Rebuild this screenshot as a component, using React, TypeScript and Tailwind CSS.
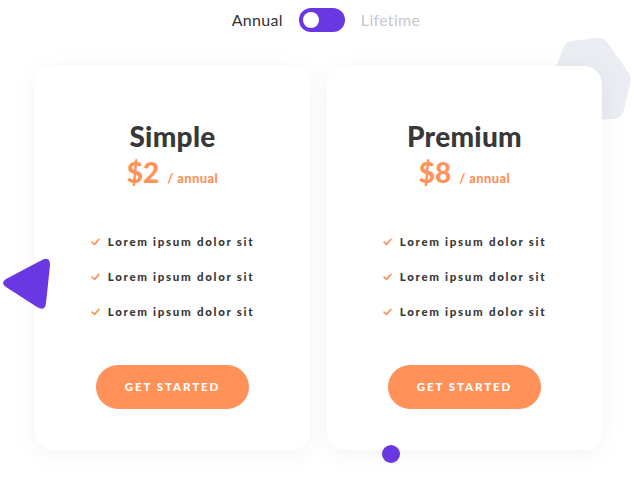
import React, { useState } from 'react';

const features = ['Lorem ipsum dolor sit', 'Lorem ipsum dolor sit', 'Lorem ipsum dolor sit'];

const plans = [
  { name: 'Simple', price: '$2' },
  { name: 'Premium', price: '$8' },
];

const Check: React.FC = () => (
  <svg width="9" height="8" viewBox="0 0 9 8" className="shrink-0">
    <path d="M1.2 4.2 L3.5 6.3 L7.8 1.5" fill="none" stroke="#ff9159" strokeWidth="1.8" strokeLinecap="round" strokeLinejoin="round" />
  </svg>
);

const PlanCard: React.FC<{ name: string; price: string }> = ({ name, price }) => (
  <div className="relative z-10 w-[275px] h-[384px] bg-white rounded-[18px] shadow-[0_4px_24px_rgba(0,0,0,0.05)] flex flex-col items-center">
    <h2 className="mt-[52px] text-[28px] leading-[36px] font-black text-[#383838] tracking-[0.3px]">{name}</h2>
    <div className="mt-[3px] flex items-baseline gap-[8px] text-[#ff9159] font-black">
      <span className="text-[28px] leading-[30px]">{price}</span>
      <span className="text-[13px] tracking-[0.4px]">/ annual</span>
    </div>
    <ul className="mt-[46px] flex flex-col gap-[20px]">
      {features.map((f, i) => (
        <li key={i} className="flex items-center gap-[8px] h-[15px]">
          <Check />
          <span className="text-[11.5px] font-black tracking-[1.7px] text-[#383838]">{f}</span>
        </li>
      ))}
    </ul>
    <button className="mt-[45px] w-[153px] h-[44px] rounded-full bg-[#ff9159] text-white text-[11.5px] font-black tracking-[1.9px]">
      GET STARTED
    </button>
  </div>
);

export default function App() {
  const [lifetime, setLifetime] = useState(false);

  return (
    <div className="relative w-[634px] h-[483px] overflow-hidden bg-white" style={{ fontFamily: 'Lato, "Noto Sans", sans-serif' }}>
      {/* decorative shapes */}
      <svg className="absolute left-[550px] top-[36px]" width="84" height="86" viewBox="0 0 84 86">
        <path
          d="M14 10 Q16 6 22 5 L46 2 Q53 1 57 6 L78 36 Q82 42 80 48 L74 74 Q72 82 64 83 L40 84 Q32 84 28 78 L6 48 Q2 42 4 36 Z"
          fill="#e9ecf0"
        />
      </svg>
      <svg className="absolute left-[0px] top-[255px] z-20" width="54" height="58" viewBox="0 0 54 58">
        <path d="M6 24 L42 5 Q50 1 50 10 L46 48 Q45 57 37 52 L6 32 Q0 28 6 24 Z" fill="#6a38e2" />
      </svg>
      <div className="absolute left-[382px] top-[445px] w-[18px] h-[18px] rounded-full bg-[#6a38e2] z-20" />

      {/* toggle */}
      <div className="flex items-center justify-center gap-[16px] h-[40px] pl-[18px]">
        <span className={`text-[16px] tracking-[0.3px] ${lifetime ? 'text-[#c5c8cf]' : 'text-[#333]'}`}>Annual</span>
        <button
          onClick={() => setLifetime(!lifetime)}
          className={`w-[46px] h-[24px] rounded-full bg-[#6a38e2] flex items-center px-[4px] ${lifetime ? 'justify-end' : 'justify-start'}`}
        >
          <span className="w-[16px] h-[16px] rounded-full bg-white" />
        </button>
        <span className={`text-[16px] tracking-[0.3px] ${lifetime ? 'text-[#333]' : 'text-[#c5c8cf]'}`}>Lifetime</span>
      </div>

      {/* cards */}
      <div className="flex gap-[17px] pl-[35px] mt-[26px]">
        {plans.map((p) => (
          <PlanCard key={p.name} name={p.name} price={p.price} />
        ))}
      </div>
    </div>
  );
}
